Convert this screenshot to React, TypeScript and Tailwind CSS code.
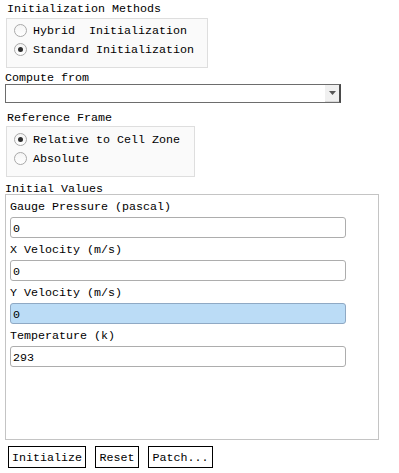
import React from "react";

const font = { fontFamily: '"Liberation Mono", "DejaVu Sans Mono", monospace' };

const Radio = ({ label, checked }: { label: string; checked?: boolean }) => (
  <div className="flex h-[19px] items-center gap-[6px] pl-[7px]">
    <div className="flex h-[13px] w-[13px] items-center justify-center rounded-full border border-[#a9a9a9] bg-gradient-to-b from-[#f4f4f4] to-white">
      {checked && <div className="h-[5px] w-[5px] rounded-full bg-[#2e2e2e]" />}
    </div>
    <span className="whitespace-pre leading-[14px]">{label}</span>
  </div>
);

const fields = [
  { label: "Gauge Pressure (pascal)", value: "0" },
  { label: "X Velocity (m/s)", value: "0" },
  { label: "Y Velocity (m/s)", value: "0", active: true },
  { label: "Temperature (k)", value: "293" },
];

const App = () => {
  return (
    <div
      className="flex h-[473px] w-[399px] flex-col bg-white text-[11.67px] text-black"
      style={font}
    >
      <div className="h-[18px] pl-[7px] pt-[2px] leading-[14px]">Initialization Methods</div>

      <div className="ml-[6px] h-[50px] w-[202px] border border-[#dedede] bg-[#fafafa] pt-[2px]">
        <Radio label="Hybrid  Initialization" />
        <Radio label="Standard Initialization" checked />
      </div>

      <div className="h-[16px] pl-[5px] pt-[3px] leading-[14px]">Compute from</div>

      <div className="ml-[5px] flex h-[19px] w-[336px] border border-[#6d6d6d] border-r-2 border-r-[#4a4a4a] bg-white">
        <div className="flex-1" />
        <div className="flex w-[14px] items-center justify-center border-b border-[#d8d8d8] bg-[#f0f0f0]">
          <svg width="7" height="4" viewBox="0 0 7 4">
            <path d="M0 0h7L3.5 4z" fill="#555" />
          </svg>
        </div>
      </div>

      <div className="h-[23px] pl-[7px] pt-[8px] leading-[14px]">Reference Frame</div>

      <div className="ml-[6px] h-[51px] w-[189px] border border-[#dedede] bg-[#fafafa] pt-[3px]">
        <Radio label="Relative to Cell Zone" checked />
        <Radio label="Absolute" />
      </div>

      <div className="h-[17px] pl-[5px] pt-[5px] leading-[14px]">Initial Values</div>

      <div className="ml-[5px] h-[246px] w-[374px] border border-[#c4c4c4] bg-white">
        {fields.map((f) => (
          <div key={f.label}>
            <div className="h-[22px] pl-[4px] pt-[5px] leading-[14px]">{f.label}</div>
            <div
              className={
                f.active
                  ? "ml-[4px] h-[21px] w-[336px] rounded-[3px] border border-[#8fa9c4] bg-[#bbdcf6] pl-[2px] pt-[4px] leading-[14px]"
                  : "ml-[4px] h-[21px] w-[336px] rounded-[3px] border border-[#adadad] bg-white pl-[2px] pt-[4px] leading-[14px]"
              }
            >
              {f.value}
            </div>
          </div>
        ))}
      </div>

      <div className="ml-[8px] mt-[6px] flex gap-[9px]">
        <button className="flex h-[22px] w-[78px] justify-center border border-black bg-white pt-[4px] leading-[14px]">
          Initialize
        </button>
        <button className="flex h-[22px] w-[44px] justify-center border border-black bg-white pt-[4px] leading-[14px]">
          Reset
        </button>
        <button className="flex h-[22px] w-[65px] justify-center border border-black bg-white pt-[4px] leading-[14px]">
          Patch...
        </button>
      </div>
    </div>
  );
};

export default App;
